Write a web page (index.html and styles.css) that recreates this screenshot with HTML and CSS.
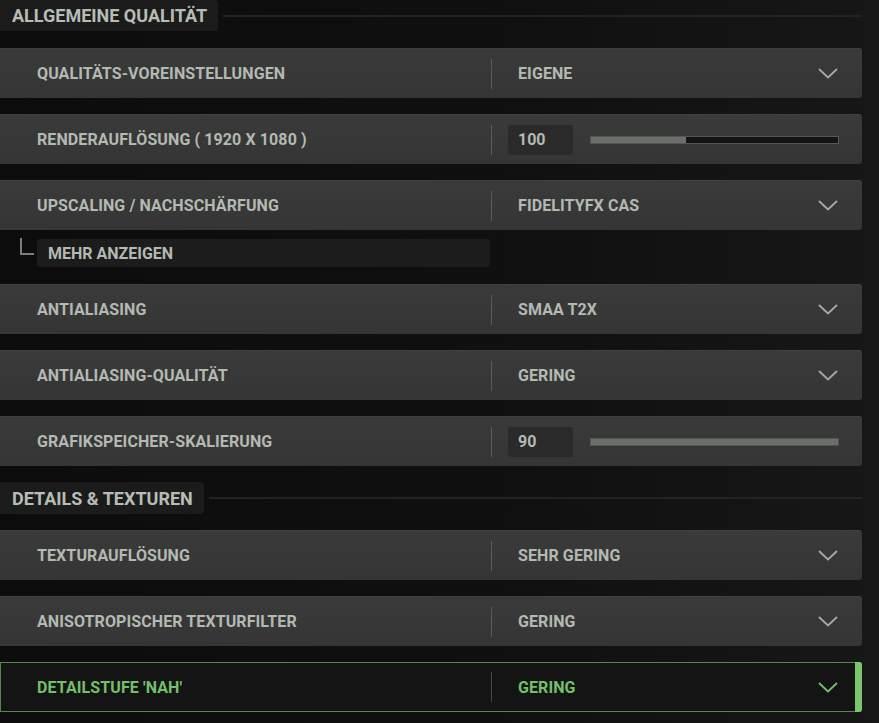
FILE: index.html
```html
<!DOCTYPE html>
<html lang="de">
<head>
<meta charset="utf-8">
<link rel="stylesheet" href="styles.css">
</head>
<body>
<div class="page">
  <div class="section-head"><span class="section-title">ALLGEMEINE QUALITÄT</span><span class="section-line"></span></div>

  <div class="row"><span class="label">QUALITÄTS-VOREINSTELLUNGEN</span><span class="divider"></span><span class="value">EIGENE</span><svg class="chev" viewBox="0 0 20 11"><path d="M1 1 L10 9.5 L19 1"/></svg></div>

  <div class="row"><span class="label">RENDERAUFLÖSUNG ( 1920 X 1080 )</span><span class="divider"></span><div class="slider"><span class="num">100</span><div class="track"><div class="fill" style="width:38.5%"></div></div></div></div>

  <div class="row"><span class="label">UPSCALING / NACHSCHÄRFUNG</span><span class="divider"></span><span class="value">FIDELITYFX CAS</span><svg class="chev" viewBox="0 0 20 11"><path d="M1 1 L10 9.5 L19 1"/></svg></div>

  <div class="sub"><span class="corner"></span><div class="sub-btn">MEHR ANZEIGEN</div></div>

  <div class="row"><span class="label">ANTIALIASING</span><span class="divider"></span><span class="value">SMAA T2X</span><svg class="chev" viewBox="0 0 20 11"><path d="M1 1 L10 9.5 L19 1"/></svg></div>

  <div class="row"><span class="label">ANTIALIASING-QUALITÄT</span><span class="divider"></span><span class="value">GERING</span><svg class="chev" viewBox="0 0 20 11"><path d="M1 1 L10 9.5 L19 1"/></svg></div>

  <div class="row"><span class="label">GRAFIKSPEICHER-SKALIERUNG</span><span class="divider"></span><div class="slider"><span class="num">90</span><div class="track"><div class="fill" style="width:100%"></div></div></div></div>

  <div class="section-head second"><span class="section-title">DETAILS &amp; TEXTUREN</span><span class="section-line"></span></div>

  <div class="row"><span class="label">TEXTURAUFLÖSUNG</span><span class="divider"></span><span class="value">SEHR GERING</span><svg class="chev" viewBox="0 0 20 11"><path d="M1 1 L10 9.5 L19 1"/></svg></div>

  <div class="row"><span class="label">ANISOTROPISCHER TEXTURFILTER</span><span class="divider"></span><span class="value">GERING</span><svg class="chev" viewBox="0 0 20 11"><path d="M1 1 L10 9.5 L19 1"/></svg></div>

  <div class="row active"><span class="label">DETAILSTUFE 'NAH'</span><span class="divider"></span><span class="value">GERING</span><svg class="chev" viewBox="0 0 20 11"><path d="M1 1 L10 9.5 L19 1"/></svg><span class="marker"></span></div>
</div>
</body>
</html>
```

FILE: styles.css
```css
html, body {
  margin: 0;
  padding: 0;
  height: 100%;
}
body {
  background: linear-gradient(90deg, #0c0c0c 0%, #101010 60%, #171717 100%);
  font-family: Roboto, "Liberation Sans", sans-serif;
  font-weight: 700;
  color: #b3bab1;
  overflow: hidden;
}
.page {
  width: 862px;
  display: flex;
  flex-direction: column;
}
.section-head {
  display: flex;
  align-items: center;
  height: 31px;
  margin-bottom: 17px;
}
.section-head.second {
  height: 32px;
  margin-bottom: 16px;
}
.section-title {
  height: 100%;
  display: flex;
  align-items: center;
  padding: 0 11px 0 12px;
  background: #1b1b1b;
  border-radius: 0 4px 4px 0;
  font-size: 18px;
  letter-spacing: 0;
  color: #b6bdb4;
}
.section-line {
  flex: 1;
  height: 2px;
  background: #232323;
  margin-left: 5px;
}
.row {
  position: relative;
  height: 50px;
  box-sizing: border-box;
  display: flex;
  align-items: center;
  background: linear-gradient(180deg, #3a3a3a 0%, #353535 100%);
  border-top: 1px solid #404040;
  border-radius: 0 3px 3px 0;
  margin-bottom: 16px;
  padding-right: 24px;
  font-size: 16px;
}
.label {
  width: 454px;
  padding-left: 37px;
  letter-spacing: 0.1px;
}
.divider {
  width: 1px;
  height: 30px;
  background: #5b5b5b;
  flex: none;
}
.value {
  flex: 1;
  padding-left: 26px;
  letter-spacing: 0.1px;
}
.chev {
  width: 20px;
  height: 11px;
  flex: none;
}
.chev path {
  fill: none;
  stroke: #a4aba2;
  stroke-width: 1.8;
}
.slider {
  flex: 1;
  display: flex;
  align-items: center;
  padding-left: 16px;
  margin-right: -1px;
}
.num {
  width: 65px;
  height: 30px;
  box-sizing: border-box;
  padding-left: 10px;
  display: flex;
  align-items: center;
  background: #2a2a2a;
  border-radius: 3px;
}
.track {
  flex: 1;
  margin-left: 17px;
  height: 8px;
  box-sizing: border-box;
  background: #141414;
  border: 1px solid #555;
}
.fill {
  height: 100%;
  background: #6a6f69;
}
.sub {
  display: flex;
  align-items: flex-start;
  height: 28px;
  margin-top: -7px;
  margin-bottom: 17px;
}
.corner {
  width: 12px;
  height: 15px;
  margin-left: 20px;
  margin-top: -1px;
  margin-right: 3px;
  border-left: 2px solid #7a7d79;
  border-bottom: 2px solid #7a7d79;
  flex: none;
}
.sub-btn {
  width: 453px;
  height: 28px;
  box-sizing: border-box;
  padding-left: 11px;
  display: flex;
  align-items: center;
  background: #1c1c1c;
  border-radius: 3px;
  font-size: 16px;
}
.row.active {
  background: #141414;
  border: none;
  box-shadow: inset 0 0 0 1px #4f8a47;
  color: #72c069;
}
.row.active .divider {
  background: #3f4a3e;
}
.row.active .chev path {
  stroke: #72c069;
}
.marker {
  position: absolute;
  right: 0;
  top: 0;
  bottom: 0;
  width: 7px;
  background: #7cc470;
  border-radius: 0 3px 3px 0;
}
```
